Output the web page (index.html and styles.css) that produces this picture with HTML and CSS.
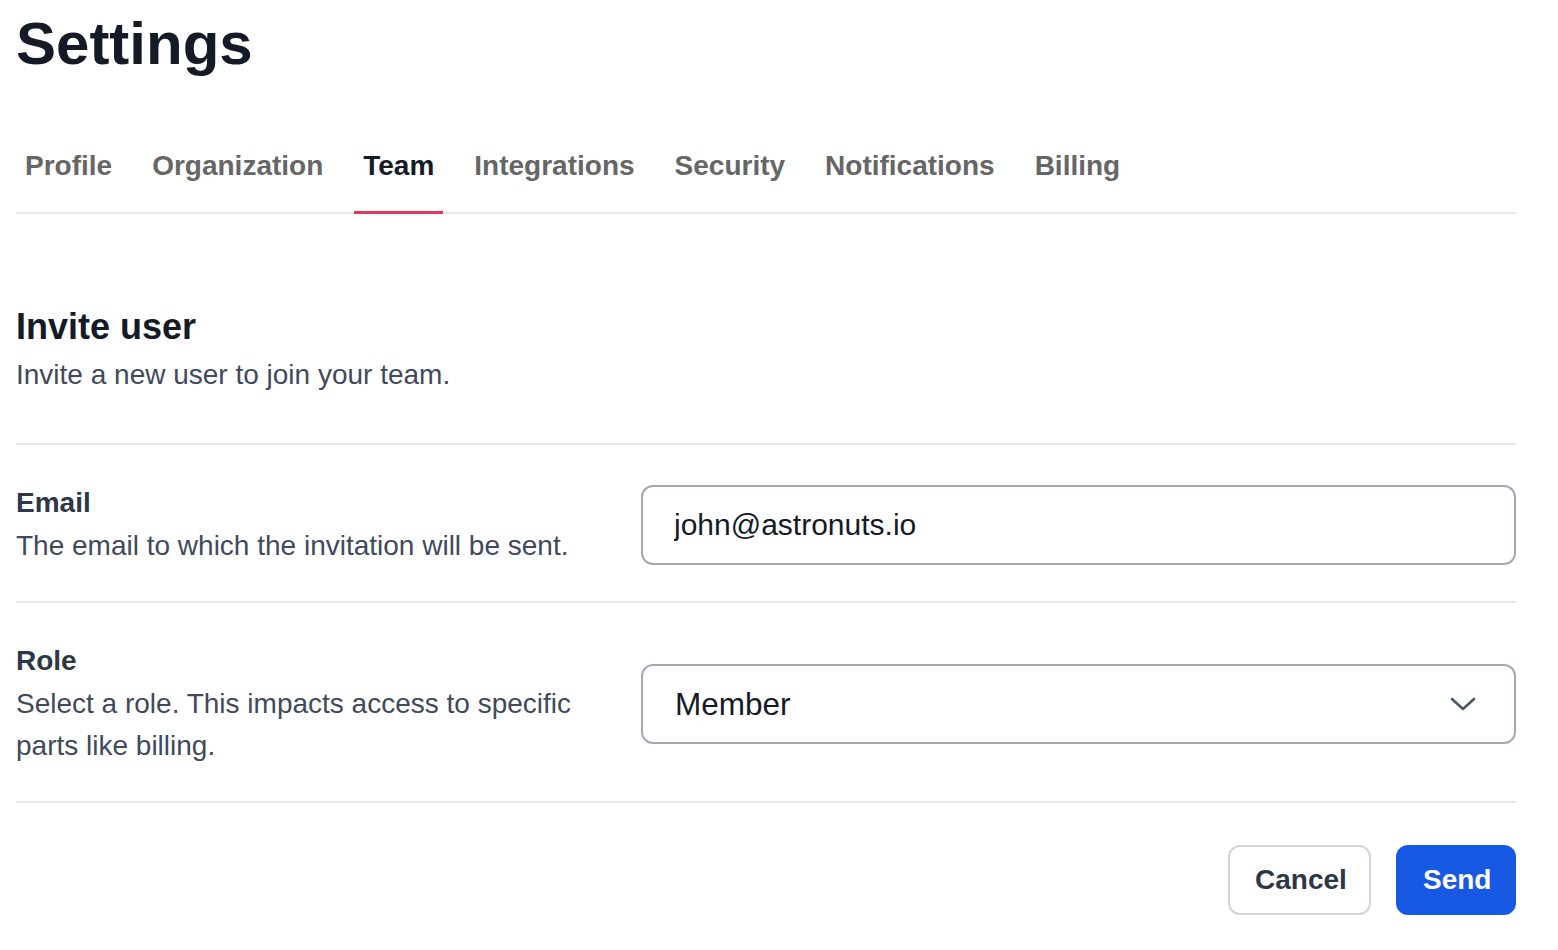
FILE: index.html
```html
<!DOCTYPE html>
<html lang="en">
<head>
<meta charset="utf-8">
<title>Settings</title>
<link rel="stylesheet" href="styles.css">
</head>
<body>
<div class="page">
  <h1 class="title">Settings</h1>
  <nav class="tabs">
    <a class="tab">Profile</a>
    <a class="tab">Organization</a>
    <a class="tab active">Team</a>
    <a class="tab">Integrations</a>
    <a class="tab">Security</a>
    <a class="tab">Notifications</a>
    <a class="tab">Billing</a>
  </nav>
  <section class="section-head">
    <h2 class="section-title">Invite user</h2>
    <p class="section-desc">Invite a new user to join your team.</p>
  </section>
  <div class="row">
    <div class="field-info">
      <div class="label">Email</div>
      <div class="desc">The email to which the invitation will be sent.</div>
    </div>
    <input class="control text-input" type="text" value="john@astronuts.io">
  </div>
  <div class="row">
    <div class="field-info">
      <div class="label">Role</div>
      <div class="desc">Select a role. This impacts access to specific parts like billing.</div>
    </div>
    <div class="select-wrap">
      <select class="control select">
        <option>Member</option>
        <option>Admin</option>
      </select>
      <svg class="chevron" width="26" height="16" viewBox="0 0 26 16" fill="none"><path d="M2 3 L13 13 L24 3" stroke="#4b5563" stroke-width="2.6" stroke-linecap="round" stroke-linejoin="round"/></svg>
    </div>
  </div>
  <div class="actions">
    <button class="btn btn-cancel">Cancel</button>
    <button class="btn btn-send">Send</button>
  </div>
</div>
</body>
</html>
```
FILE: styles.css
```css
* { box-sizing: border-box; }
body {
  margin: 0;
  background: #ffffff;
  font-family: "Liberation Sans", Arial, Helvetica, sans-serif;
  color: #111827;
}
.page {
  width: 1532px;
  padding: 0 16px;
}
.title {
  margin: 0;
  padding-top: 11px;
  font-size: 60px;
  line-height: 65px;
  font-weight: 700;
  color: #151a27;
}
.tabs {
  display: flex;
  gap: 22px;
  margin-top: 69px;
  border-bottom: 2px solid #e5e7eb;
}
.tab {
  position: relative;
  padding: 0 9px 25px;
  font-size: 28px;
  line-height: 42px;
  font-weight: 700;
  color: #666666;
}
.tab.active { color: #151a27; }
.tab.active::after {
  content: "";
  position: absolute;
  left: 0;
  right: 0;
  bottom: -2px;
  height: 3px;
  background: #e0385a;
}
.section-head {
  padding-top: 91px;
  padding-bottom: 48px;
  border-bottom: 2px solid #e5e7eb;
}
.section-title {
  margin: 0;
  font-size: 36px;
  line-height: 44px;
  font-weight: 700;
  color: #151a27;
}
.section-desc {
  margin: 6px 0 0;
  font-size: 28px;
  line-height: 40px;
  color: #3f4a5c;
}
.row {
  display: grid;
  grid-template-columns: 593px 1fr;
  column-gap: 32px;
  align-items: center;
  padding: 38px 0 34px;
  border-bottom: 2px solid #e5e7eb;
}
.label {
  font-size: 28px;
  line-height: 40px;
  font-weight: 700;
  color: #2d3748;
  margin-bottom: 2px;
}
.desc {
  font-size: 28px;
  line-height: 42px;
  color: #3f4a5c;
}
.control {
  width: 100%;
  height: 80px;
  border: 2px solid #a4a8b6;
  border-radius: 12px;
  background: #ffffff;
  font-family: "Liberation Sans", Arial, Helvetica, sans-serif;
  color: #151a27;
  outline: none;
}
.text-input {
  padding: 0 31px;
  font-size: 30px;
}
.select-wrap {
  position: relative;
}
.select {
  appearance: none;
  -webkit-appearance: none;
  padding: 0 60px 0 32px;
  font-size: 31.5px;
}
.chevron {
  position: absolute;
  right: 40px;
  top: 32px;
  pointer-events: none;
}
.actions {
  display: flex;
  justify-content: flex-end;
  gap: 25px;
  padding-top: 42px;
}
.btn {
  height: 70px;
  border-radius: 12px;
  font-family: "Liberation Sans", Arial, Helvetica, sans-serif;
  font-size: 28px;
  font-weight: 700;
  padding: 0 25px;
  cursor: pointer;
}
.btn-cancel {
  background: #ffffff;
  border: 2px solid #d1d5db;
  color: #2d3748;
  width: 143px;
}
.btn-send {
  background: #1859e4;
  border: 2px solid #1859e4;
  color: #ffffff;
  width: 120px;
}
```
